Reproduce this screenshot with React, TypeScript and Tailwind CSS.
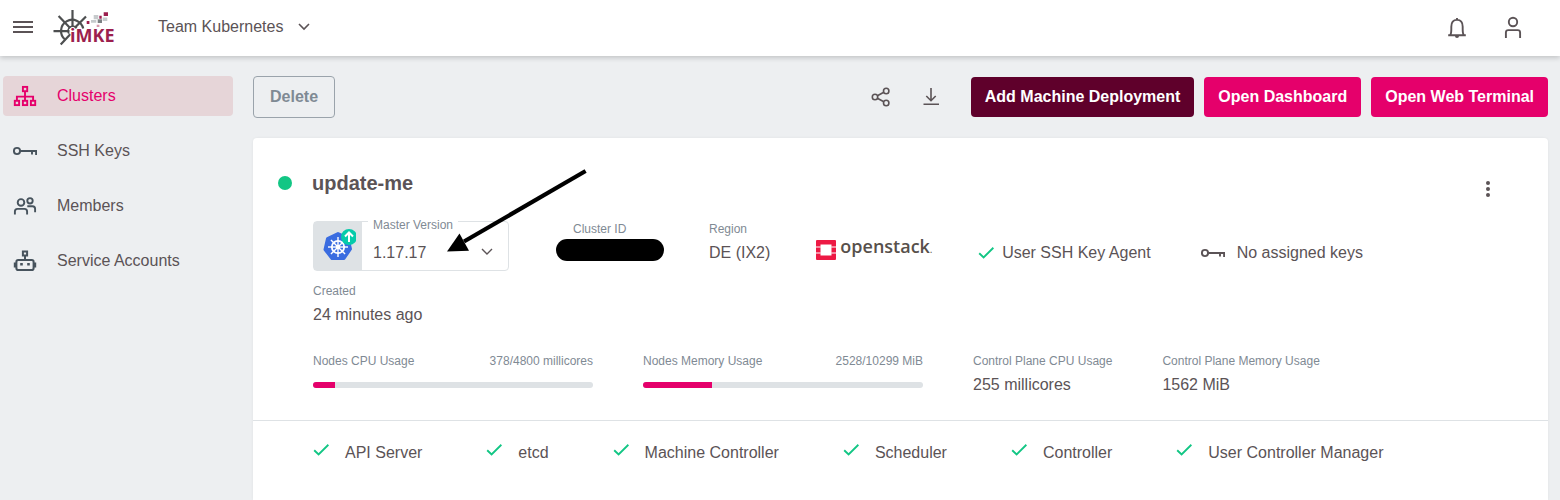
import React from "react";

function CheckIcon({ className = "" }: { className?: string }) {
  return (
    <svg aria-hidden="true" className={`shrink-0 ${className}`} width="16" height="16" viewBox="0 0 16 16" fill="none" stroke="#12c684" strokeWidth="1.9">
      <path d="M1.2 8.2 5.6 12.4 15.4 2.8" />
    </svg>
  );
}

function KeyIcon({ color }: { color: string }) {
  return (
    <svg aria-hidden="true" className="shrink-0" width="24" height="24" viewBox="0 0 24 24" fill="none" stroke={color} strokeWidth="1.9">
      <circle cx="4" cy="12" r="3.1" />
      <path d="M7 12H24M23.1 12v4M19 12v3.6" />
    </svg>
  );
}

function ClustersIcon() {
  return (
    <svg aria-hidden="true" className="shrink-0" width="24" height="24" viewBox="0 0 24 24" fill="none" stroke="#e5006b" strokeWidth="1.9">
      <rect x="9.9" y="2.9" width="4.3" height="4.3" />
      <path d="M12 7.2v9.5M3.9 16.700v-4.100h16.200v4.100" />
      <rect x="1.8" y="16.8" width="4.3" height="4.3" />
      <rect x="9.9" y="16.8" width="4.3" height="4.3" />
      <rect x="17.9" y="16.8" width="4.3" height="4.3" />
    </svg>
  );
}

function MembersIcon() {
  return (
    <svg aria-hidden="true" className="shrink-0" width="24" height="24" viewBox="0 0 24 24" fill="none" stroke="#47535d" strokeWidth="1.9">
      <circle cx="8" cy="8.400" r="3.300" />
      <circle cx="17" cy="6.800" r="2.700" />
      <path d="M1.900 20.500v-3q0-2.600 2.600-2.600h7q2.600 0 2.600 2.600v3M14.300 12.200h5.200q2.600 0 2.600 2.600v3.400" />
    </svg>
  );
}

function RobotIcon() {
  return (
    <svg aria-hidden="true" className="shrink-0" width="24" height="24" viewBox="0 0 24 24" fill="none" stroke="#47535d" strokeWidth="2">
      <rect x="9.900" y="2.500" width="4.200" height="4" />
      <path d="M12 6.500v4.500" />
      <rect x="3.400" y="10.900" width="17.200" height="10.200" rx="1.800" />
      <path d="M1.900 13.500v5M22.100 13.500v5" strokeWidth="2.200" />
      <path d="M7.200 15.300h2.600M14.200 15.300h2.600" strokeWidth="2.600" />
    </svg>
  );
}

function Logo() {
  return (
    <svg role="img" aria-label="iMKE" width="62" height="38" viewBox="0 0 62 38">
      <g fill="none" stroke="#4d4f50" strokeWidth="2.200">
        <path d="M12 30.500A11.200 11.200 0 1 1 30.200 19.500" />
        <path d="M19.500 1v17M0.500 22.200h16M5.600 7l11.500 12M33 7.500 21.500 19M17.500 25 7.700 35.500" />
        <path d="M15.800 24.500a4.600 4.600 0 1 1 8-5" strokeWidth="1.700" />
      </g>
      <path fill="#9c1f4e" d="M50.700 3.300H55V7h-4.300zM46.300 6.700h2.400v3h-2.400zM33.700 12h2.700v3h-2.700z" />
      <path fill="#c6cacc" d="M40.700 6h4.600v4.300h-4.600zM49.700 8.500h4.600v3.400h-4.600zM38 11h5.300v2.700H38z" />
      <path fill="#7c8183" d="M44.700 10.300H49V14h-4.300z" />
      <path fill="#d79aad" d="M43.700 15.700h2.700V18h-2.700z" />
      <text x="17" y="33" fontFamily="Open Sans, sans-serif" fontWeight="700" fontSize="18" fill="#9c1f4e" stroke="#fff" strokeWidth="1.600" paintOrder="stroke">iMKE</text>
    </svg>
  );
}

const spokes = [0, 45, 90, 135, 180, 225, 270, 315];

function KubernetesIcon() {
  return (
    <svg aria-hidden="true" width="36" height="36" viewBox="0 0 36 36">
      <path fill="#3a6ce0" stroke="#3a6ce0" strokeWidth="3" strokeLinejoin="round" d="M18 5.500 28 10 30.500 21 24 30.500H12L5 21.500 7.500 10.500z" />
      <g stroke="#fff" fill="none" strokeWidth="1.800" transform="translate(18 19)">
        <circle r="6.200" />
        {spokes.map((a) => (
          <path key={a} d="M0-1V-10" transform={`rotate(${a})`} strokeWidth="1.400" />
        ))}
        <circle r="1.300" fill="#fff" />
      </g>
      <circle cx="29" cy="9" r="8" fill="#06cbaa" />
      <path d="M29 14V5M25 8.500l4-4 4 4" fill="none" stroke="#fff" strokeWidth="2" />
    </svg>
  );
}

const nav = [
  { label: "Clusters", icon: <ClustersIcon />, active: true },
  { label: "SSH Keys", icon: <KeyIcon color="#47535d" />, active: false },
  { label: "Members", icon: <MembersIcon />, active: false },
  { label: "Service Accounts", icon: <RobotIcon />, active: false },
];

const health = ["API Server", "etcd", "Machine Controller", "Scheduler", "Controller", "User Controller Manager"];

function Stat({ label, value }: { label: string; value: string }) {
  return (
    <div>
      <div className="text-xs leading-4 text-[#7f8a94]">{label}</div>
      <div className="mt-1 leading-6">{value}</div>
    </div>
  );
}

function Usage({ label, amount, percent }: { label: string; amount: string; percent: number }) {
  return (
    <div className="w-[280px]">
      <div className="flex justify-between text-xs leading-4 text-[#7f8a94]">
        <span>{label}</span>
        <span>{amount}</span>
      </div>
      <div role="progressbar" aria-label={label} aria-valuenow={percent} className="mt-[13px] h-1.5 overflow-hidden rounded-full bg-[#dee2e5]">
        <div className="h-full bg-[#e5006b]" style={{ width: `${percent}%` }} />
      </div>
    </div>
  );
}

export default function App() {
  return (
    <div className="flex min-h-screen flex-col bg-[#edeff1] font-['Liberation_Sans',Arial,sans-serif] text-base text-[#5b5356]">
      <header className="relative flex h-14 items-center bg-white pr-[35px] pl-3 shadow-[0_2px_5px_rgba(0,0,0,0.18)]">
        <button type="button" aria-label="Menu">
          <svg width="22" height="22" viewBox="0 0 22 22" stroke="#5b5356" strokeWidth="2">
            <path d="M1 5h20M1 10h20M1 15h20" />
          </svg>
        </button>
        <a href="#home" className="ml-[19px]"><Logo /></a>
        <button type="button" className="ml-[43px] flex items-center gap-[15px] pb-0.5 leading-6">
          Team Kubernetes
          <svg aria-hidden="true" width="12" height="12" viewBox="0 0 12 12" fill="none" stroke="#5b5356" strokeWidth="1.600">
            <path d="M1 3l5 5 5-5" />
          </svg>
        </button>
        <div className="ml-auto flex gap-8">
          <button type="button" aria-label="Notifications">
            <svg width="24" height="24" viewBox="0 0 24 24" fill="none" stroke="#5b5356" strokeWidth="1.900">
              <path d="M3.200 19.200h17.600M5.300 19c1.300-2 1-5 1-8.200C6.300 6.500 8.500 3.900 12 3.900s5.700 2.600 5.700 6.900c0 3.200-.3 6.200 1 8.200M12 2v2" />
              <path d="M10 20h4a2 2 0 0 1-4 0z" fill="#5b5356" stroke="none" />
            </svg>
          </button>
          <button type="button" aria-label="Account">
            <svg width="24" height="24" viewBox="0 0 24 24" fill="none" stroke="#5b5356" strokeWidth="1.900">
              <circle cx="12" cy="6" r="4.200" />
              <path d="M4.900 22v-5.500q0-2.400 2.400-2.400h9.400q2.400 0 2.400 2.400V22" />
            </svg>
          </button>
        </div>
      </header>

      <div className="flex flex-1">
        <nav className="flex w-[233px] shrink-0 flex-col gap-[15px] pt-5 pl-[3px]">
          {nav.map((n) => (
            <a
              key={n.label}
              href="#nav"
              className={`flex h-10 items-center gap-5 rounded-sm pl-2.5 ${n.active ? "bg-[#e6d5d8] text-[#e5006b]" : ""}`}
            >
              {n.icon}
              {n.label}
            </a>
          ))}
        </nav>

        <main className="flex min-w-0 flex-1 flex-col pt-5 pr-3 pl-5">
          <div className="flex h-[42px] items-center">
            <button type="button" className="h-[42px] rounded border border-[#9aa3ab] px-4 font-bold text-[#7f8a94]">Delete</button>
            <div className="ml-auto flex items-center gap-[26px]">
              <button type="button" aria-label="Share">
                <svg width="24" height="24" viewBox="0 0 24 24" fill="none" stroke="#5b5356" strokeWidth="1.600">
                  <circle cx="6" cy="12" r="2.700" />
                  <circle cx="17.200" cy="6" r="2.700" />
                  <circle cx="17.200" cy="18" r="2.700" />
                  <path d="M8.400 10.800l6.400-3.500M8.400 13.200l6.400 3.500" />
                </svg>
              </button>
              <button type="button" aria-label="Download">
                <svg width="24" height="24" viewBox="0 0 24 24" fill="none" stroke="#5b5356" strokeWidth="1.600">
                  <path d="M12 3v12.500M7.300 11l4.700 4.700 4.700-4.700M4.500 19.200h15.500" />
                </svg>
              </button>
            </div>
            <div className="ml-7 flex gap-2.5 font-bold text-white">
              <button type="button" className="h-10 rounded bg-[#5f002b] px-3.5">Add Machine Deployment</button>
              <button type="button" className="h-10 rounded bg-[#e5006b] px-3.5">Open Dashboard</button>
              <button type="button" className="h-10 rounded bg-[#e5006b] px-3.5">Open Web Terminal</button>
            </div>
          </div>

          <section className="mt-5 flex-1 rounded-t bg-white shadow-[0_0_3px_rgba(0,0,0,0.06)]">
            <div className="flex items-start pt-[33px] pr-12 pl-[25px]">
              <span className="mt-[5px] size-3.5 rounded-full bg-[#12c684]" />
              <h1 className="ml-5 text-xl leading-6 font-bold">update-me</h1>
              <button type="button" aria-label="More" className="mt-1.5 ml-auto">
                <svg width="24" height="24" viewBox="0 0 24 24" fill="#5b5356">
                  <circle cx="12" cy="6" r="2" />
                  <circle cx="12" cy="12" r="2" />
                  <circle cx="12" cy="18" r="2" />
                </svg>
              </button>
            </div>

            <div className="flex flex-wrap items-start gap-y-3 px-[60px] pt-5">
              <div className="relative mr-[47px] flex h-[50px] w-[196px] rounded border border-[#dee2e5]">
                <div className="flex w-12 items-center justify-center bg-[#dee2e5]"><KubernetesIcon /></div>
                <label htmlFor="version" className="absolute -top-[5px] left-[54px] bg-white px-[5px] text-xs leading-4 text-[#7f8a94]">Master Version</label>
                <select id="version" className="min-w-0 flex-1 appearance-none bg-transparent pt-3.5 pl-[11px]">
                  <option>1.17.17</option>
                </select>
                <svg aria-hidden="true" className="pointer-events-none absolute top-6 right-[15px]" width="12" height="12" viewBox="0 0 12 12" fill="none" stroke="#5b5356" strokeWidth="1.400">
                  <path d="M1 3l5 5 5-5" />
                </svg>
                <svg aria-hidden="true" className="pointer-events-none absolute -top-[54px] left-[132px]" width="144" height="88" viewBox="0 0 144 88">
                  <path d="M139.600 3 18 73.500" stroke="#000" strokeWidth="4.200" />
                  <path d="M1 83.500 13.500 65.500 23 82.700z" />
                </svg>
              </div>
              <div className="mr-[45px] flex w-[108px] flex-col">
                <span className="pl-[17px] text-xs leading-4 text-[#7f8a94]">Cluster ID</span>
                <span className="mt-0.5 h-[22px] rounded-full bg-black" />
              </div>
              <div className="mr-[46px]"><Stat label="Region" value="DE (IX2)" /></div>
              <div className="mr-[46px] flex h-[58px] items-center gap-1">
                <svg aria-hidden="true" width="20" height="20" viewBox="0 0 20 20">
                  <path fill="#ed1944" fillRule="evenodd" d="M1 0h18a1 1 0 0 1 1 1v5.500h-4.500V4.500h-11v2H0V1a1 1 0 0 1 1-1zM0 7.500h4.500v5H0zM15.500 7.500H20v5h-4.500zM0 13.500h4.500v2h11v-2H20V19a1 1 0 0 1-1 1H1a1 1 0 0 1-1-1z" />
                  <path fill="#f48fa5" d="M0 6.500h4.500v1H0zM0 12.500h4.500v1H0zM15.500 6.500H20v1h-4.500zM15.500 12.500H20v1h-4.500z" />
                </svg>
                <span className="pb-1 font-['Open_Sans',sans-serif] text-lg leading-5 font-semibold text-[#57504b]">openstack<span className="text-[8px]">.</span></span>
              </div>
              <div className="mr-[50px] flex h-16 items-center gap-2"><CheckIcon />User SSH Key Agent</div>
              <div className="flex h-16 items-center gap-3"><KeyIcon color="#5b5356" />No assigned keys</div>
              <div className="-mt-[14px] basis-full"><Stat label="Created" value="24 minutes ago" /></div>
            </div>

            <div className="flex flex-wrap gap-x-[50px] gap-y-4 border-b border-[#dee2e5] px-[60px] pt-[26px] pb-[23px]">
              <Usage label="Nodes CPU Usage" amount="378/4800 millicores" percent={8} />
              <Usage label="Nodes Memory Usage" amount="2528/10299 MiB" percent={24.6} />
              <Stat label="Control Plane CPU Usage" value="255 millicores" />
              <Stat label="Control Plane Memory Usage" value="1562 MiB" />
            </div>

            <ul className="flex flex-wrap gap-x-16 gap-y-4 px-[60px] pt-5">
              {health.map((h) => (
                <li key={h} className="flex gap-4 leading-6"><CheckIcon className="mt-px" />{h}</li>
              ))}
            </ul>
          </section>
        </main>
      </div>
    </div>
  );
}
